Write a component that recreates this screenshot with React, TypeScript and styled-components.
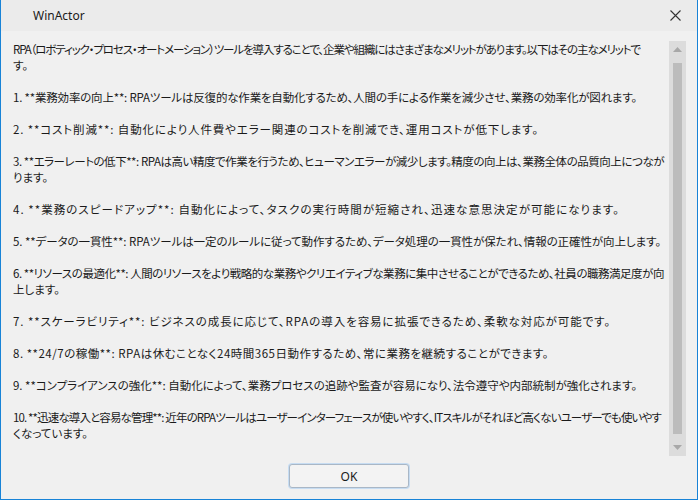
import { useLayoutEffect, useRef, useState } from 'react';
import styled, { createGlobalStyle } from 'styled-components';

const GlobalStyle = createGlobalStyle`
  html, body {
    margin: 0;
    padding: 0;
    background: #f0f0f0;
  }
  * {
    box-sizing: border-box;
  }
`;

type TextLine = { text: string; width?: number };

// widths are the wrap points measured from the reference window
const paragraphs: TextLine[][] = [
  [
    {
      text: 'RPA（ロボティック・プロセス・オートメーション）ツールを導入することで、企業や組織にはさまざまなメリットがあります。以下はその主なメリットで',
      width: 627,
    },
    { text: 'す。' },
  ],
  [{ text: '1. **業務効率の向上**: RPAツールは反復的な作業を自動化するため、人間の手による作業を減少させ、業務の効率化が図れます。', width: 624 }],
  [{ text: '2. **コスト削減**: 自動化により人件費やエラー関連のコストを削減でき、運用コストが低下します。', width: 526 }],
  [
    { text: '3. **エラーレートの低下**: RPAは高い精度で作業を行うため、ヒューマンエラーが減少します。精度の向上は、業務全体の品質向上につなが', width: 651 },
    { text: 'ります。' },
  ],
  [{ text: '4. **業務のスピードアップ**: 自動化によって、タスクの実行時間が短縮され、迅速な意思決定が可能になります。', width: 607 }],
  [{ text: '5. **データの一貫性**: RPAツールは一定のルールに従って動作するため、データ処理の一貫性が保たれ、情報の正確性が向上します。', width: 648 }],
  [
    { text: '6. **リソースの最適化**: 人間のリソースをより戦略的な業務やクリエイティブな業務に集中させることができるため、社員の職務満足度が向', width: 651 },
    { text: '上します。' },
  ],
  [{ text: '7. **スケーラビリティ**: ビジネスの成長に応じて、RPAの導入を容易に拡張できるため、柔軟な対応が可能です。', width: 598 }],
  [{ text: '8. **24/7の稼働**: RPAは休むことなく24時間365日動作するため、常に業務を継続することができます。', width: 536 }],
  [{ text: '9. **コンプライアンスの強化**: 自動化によって、業務プロセスの追跡や監査が容易になり、法令遵守や内部統制が強化されます。', width: 624 }],
  [
    { text: '10. **迅速な導入と容易な管理**: 近年のRPAツールはユーザーインターフェースが使いやすく、ITスキルがそれほど高くないユーザーでも使いやす', width: 648 },
    { text: 'くなっています。' },
  ],
];

const Window = styled.div`
  width: 698px;
  height: 500px;
  display: flex;
  flex-direction: column;
  background: #f0f0f0;
  border-left: 1px solid #1883d7;
  border-right: 1px solid #1883d7;
  border-bottom: 1px solid #1883d7;
`;

const TitleBar = styled.div`
  height: 31px;
  flex-shrink: 0;
  display: flex;
  align-items: center;
  justify-content: space-between;
  padding-left: 32px;
  padding-right: 10px;
  background: #ebebeb;
  font-family: 'Noto Sans', 'Liberation Sans', sans-serif;
  font-size: 12px;
  color: #1a1a1a;
`;

const CloseButton = styled.div`
  width: 24px;
  height: 24px;
  display: flex;
  align-items: center;
  justify-content: center;
`;

const Body = styled.div`
  flex: 1;
  display: flex;
  padding: 10px 11px 0 12px;
  min-height: 0;
`;

const TextPane = styled.div`
  flex: 1;
  overflow: hidden;
  font-family: 'Noto Sans CJK JP', 'Noto Sans', sans-serif;
  font-feature-settings: 'palt';
  font-size: 11.5px;
  line-height: 16px;
  color: #1a1a1a;
`;

const Para = styled.div`
  margin: 0 0 16px 0;
`;

const Row = styled.div`
  height: 16px;
`;

const LineText = styled.span`
  display: inline-block;
  white-space: nowrap;
`;

const ScrollTrack = styled.div`
  width: 17px;
  height: 415px;
  flex-shrink: 0;
  background: #dcdcdc;
  display: flex;
  flex-direction: column;
  align-items: center;
`;

const ArrowBox = styled.div`
  height: 17px;
  width: 17px;
  display: flex;
  align-items: center;
  justify-content: center;
`;

const Thumb = styled.div`
  width: 9px;
  margin: 5px 0;
  flex: 1;
  background: #bcbcbc;
`;

const Footer = styled.div`
  height: 43px;
  flex-shrink: 0;
  display: flex;
  justify-content: center;
  padding-top: 8px;
`;

const OkButton = styled.button`
  width: 120px;
  height: 24px;
  background: #f3f3f3;
  border: 1px solid #a9b7c6;
  border-radius: 3px;
  box-shadow: 0 0 0 1px #c6dcf2;
  font-family: 'Noto Sans', 'Liberation Sans', sans-serif;
  font-size: 12px;
  color: #1a1a1a;
  padding: 0;
`;

function FitLine({ text, width }: TextLine) {
  const ref = useRef<HTMLSpanElement>(null);
  const [spacing, setSpacing] = useState(0);

  useLayoutEffect(() => {
    if (!ref.current || !width) return;
    const natural = ref.current.getBoundingClientRect().width;
    setSpacing((width - natural) / [...text].length);
  }, [text, width]);

  return (
    <Row>
      <LineText ref={ref} style={spacing ? { letterSpacing: spacing } : undefined}>
        {text}
      </LineText>
    </Row>
  );
}

function Arrow({ up }: { up: boolean }) {
  return (
    <ArrowBox>
      <svg width="9" height="5" viewBox="0 0 9 5">
        <polygon points={up ? '0,5 9,5 4.5,0' : '0,0 9,0 4.5,5'} fill="#a8a8a8" />
      </svg>
    </ArrowBox>
  );
}

export default function App() {
  return (
    <>
      <GlobalStyle />
      <Window>
        <TitleBar>
          <span>WinActor</span>
          <CloseButton>
            <svg width="11" height="11" viewBox="0 0 11 11">
              <path d="M0.5 0.5 L10.5 10.5 M10.5 0.5 L0.5 10.5" stroke="#333" strokeWidth="1.1" />
            </svg>
          </CloseButton>
        </TitleBar>
        <Body>
          <TextPane>
            {paragraphs.map((lines, i) => (
              <Para key={i}>
                {lines.map((l, j) => (
                  <FitLine key={j} text={l.text} width={l.width} />
                ))}
              </Para>
            ))}
          </TextPane>
          <ScrollTrack>
            <Arrow up />
            <Thumb />
            <Arrow up={false} />
          </ScrollTrack>
        </Body>
        <Footer>
          <OkButton>OK</OkButton>
        </Footer>
      </Window>
    </>
  );
}
